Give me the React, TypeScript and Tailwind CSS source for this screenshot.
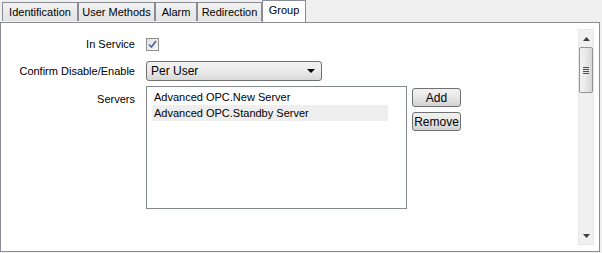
const tabs = [
  { label: 'Identification', w: 'w-[76px]' },
  { label: 'User Methods', w: 'w-[77px]' },
  { label: 'Alarm', w: 'w-[42px]' },
  { label: 'Redirection', w: 'w-[65px]' },
  { label: 'Group', w: 'w-[44px]' },
]
const servers = ['Advanced OPC.New Server', 'Advanced OPC.Standby Server']

function Tab({ label, w, active }: { label: string; w: string; active: boolean }) {
  if (active) {
    return (
      <div
        className={
          'relative z-10 -mb-px flex h-[22px] items-center justify-center border border-b-0 border-[#898c95] bg-white pb-[3px] ' +
          w
        }
      >
        {label}
      </div>
    )
  }
  return (
    <div
      className={
        'mt-[2px] flex h-[19px] items-center justify-center border border-b-0 border-[#898c95] bg-gradient-to-b from-[#f2f2f2] to-[#e3e3e3] ' +
        w
      }
    >
      {label}
    </div>
  )
}

function WinButton({ children }: { children: string }) {
  return (
    <button className="flex h-[19px] w-[49px] items-center justify-center rounded-[3px] border border-[#707070] bg-gradient-to-b from-[#f2f2f2] via-[#e6e6e6] to-[#d2d2d2] text-[12px] leading-none">
      {children}
    </button>
  )
}

function Checkbox() {
  return (
    <div className="flex h-[13px] w-[13px] items-center justify-center border border-[#8f8f8f] bg-gradient-to-br from-[#e0e0e0] to-[#fafafa]">
      <svg width="9" height="9" viewBox="0 0 9 9">
        <path d="M1 4.5 L3.5 7 L8 1" fill="none" stroke="#4d61a0" strokeWidth="1.6" />
      </svg>
    </div>
  )
}

function ScrollBar() {
  return (
    <div className="flex w-[16px] flex-col border border-[#e8e8e8] bg-[#f0f0f0]">
      <div className="flex h-[17px] items-center justify-center">
        <svg width="7" height="4" viewBox="0 0 7 4">
          <path d="M0 4 L3.5 0 L7 4 Z" fill="#3c3c3c" />
        </svg>
      </div>
      <div className="flex h-[46px] items-center justify-center rounded-[2px] border border-[#959595] bg-gradient-to-r from-[#f3f3f3] via-[#e8e8e8] to-[#d6d6d6]">
        <div className="flex flex-col gap-[1px]">
          <div className="h-px w-[6px] bg-[#505050]" />
          <div className="h-px w-[6px] bg-[#505050]" />
          <div className="h-px w-[6px] bg-[#505050]" />
          <div className="h-px w-[6px] bg-[#505050]" />
        </div>
      </div>
      <div className="flex-1" />
      <div className="flex h-[17px] items-center justify-center">
        <svg width="7" height="4" viewBox="0 0 7 4">
          <path d="M0 0 L7 0 L3.5 4 Z" fill="#3c3c3c" />
        </svg>
      </div>
    </div>
  )
}

export default function App() {
  return (
    <div
      className="h-[253px] w-[602px] overflow-hidden bg-[#f0f0f0] text-[11px] leading-none text-black"
      style={{ fontFamily: '"Liberation Sans", Arial, sans-serif' }}
    >
      <div className="flex h-[22px] items-start pl-[2px]">
        {tabs.map((t) => (
          <Tab key={t.label} label={t.label} w={t.w} active={t.label === 'Group'} />
        ))}
      </div>

      <div className="flex h-[230px] w-[600px] border border-[#898c95] bg-white">
        <div className="flex-1 pt-[15px]">
          <div className="grid grid-cols-[134px_auto] items-start gap-x-[11px]">
            <div className="flex h-[13px] items-center justify-end">In Service</div>
            <Checkbox />

            <div className="mt-[10px] flex h-[20px] items-center justify-end">Confirm Disable/Enable</div>
            <div className="mt-[10px] flex h-[20px] w-[176px] items-center justify-between rounded-[3px] border border-[#707070] bg-gradient-to-b from-[#f2f2f2] via-[#ebebeb] to-[#d8d8d8] pl-[4px] pr-[6px] text-[12px]">
              <span>Per User</span>
              <svg width="8" height="4" viewBox="0 0 8 4">
                <path d="M0 0 L8 0 L4 4 Z" fill="#000" />
              </svg>
            </div>

            <div className="mt-[9px] pt-[4px] text-right">Servers</div>
            <div className="mt-[5px] flex gap-[5px]">
              <div className="h-[123px] w-[261px] border border-[#828790] bg-white pl-[5px] pt-[2px]">
                {servers.map((s, i) => (
                  <div
                    key={s}
                    className={
                      'flex h-[16px] w-[236px] items-center pl-[2px] ' + (i === 1 ? 'bg-[#eeeeee]' : '')
                    }
                  >
                    {s}
                  </div>
                ))}
              </div>
              <div className="flex flex-col gap-[5px] pt-[2px]">
                <WinButton>Add</WinButton>
                <WinButton>Remove</WinButton>
              </div>
            </div>
          </div>
        </div>
        <div className="flex pb-[6px] pr-[5px] pt-[6px]">
          <ScrollBar />
        </div>
      </div>
    </div>
  )
}
